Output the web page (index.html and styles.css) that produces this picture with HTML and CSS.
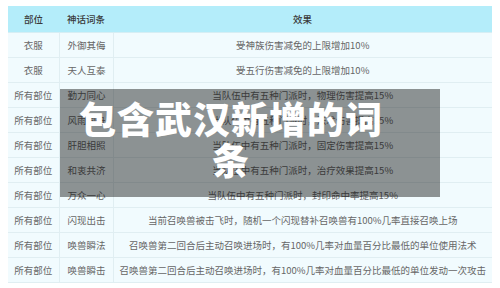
FILE: index.html
```html
<!DOCTYPE html>
<html lang="zh">
<head>
<meta charset="utf-8">
<title>神话词条</title>
<link rel="stylesheet" href="styles.css">
</head>
<body>
<div class="page">
  <table class="affix">
    <colgroup>
      <col class="c-part">
      <col class="c-name">
      <col class="c-effect">
    </colgroup>
    <thead>
      <tr><th>部位</th><th>神话词条</th><th>效果</th></tr>
    </thead>
    <tbody>
      <tr><td>衣服</td><td>外御其侮</td><td>受神族伤害减免的上限增加10%</td></tr>
      <tr><td>衣服</td><td>天人互泰</td><td>受五行伤害减免的上限增加10%</td></tr>
      <tr><td>所有部位</td><td>勤力同心</td><td>当队伍中有五种门派时，物理伤害提高15%</td></tr>
      <tr><td>所有部位</td><td>风雨同舟</td><td>当队伍中有五种门派时，法术伤害提高15%</td></tr>
      <tr><td>所有部位</td><td>肝胆相照</td><td>当队伍中有五种门派时，固定伤害提高15%</td></tr>
      <tr><td>所有部位</td><td>和衷共济</td><td>当队伍中有五种门派时，治疗效果提高15%</td></tr>
      <tr><td>所有部位</td><td>万众一心</td><td>当队伍中有五种门派时，封印命中率提高15%</td></tr>
      <tr><td>所有部位</td><td>闪现出击</td><td>当前召唤兽被击飞时，随机一个闪现替补召唤兽有100%几率直接召唤上场</td></tr>
      <tr><td>所有部位</td><td>唤兽瞬法</td><td>召唤兽第二回合后主动召唤进场时，有100%几率对血量百分比最低的单位使用法术</td></tr>
      <tr><td>所有部位</td><td>唤兽瞬击</td><td>召唤兽第二回合后主动召唤进场时，有100%几率对血量百分比最低的单位发动一次攻击</td></tr>
    </tbody>
  </table>
  <div class="banner"><h1 class="banner-title">包含武汉新增的词条</h1></div>
</div>
</body>
</html>
```
FILE: styles.css
```css
html, body {
  margin: 0;
  padding: 0;
  background: #ffffff;
}
body {
  font-family: "Noto Sans CJK SC", "Noto Sans", sans-serif;
}
.page {
  position: relative;
  width: 500px;
  height: 288px;
  padding: 6px 8px 0;
  box-sizing: border-box;
}
.affix {
  width: 484px;
  table-layout: fixed;
  border-collapse: collapse;
  font-size: 9.5px;
}
.c-part { width: 51px; }
.c-name { width: 54px; }
.affix th {
  height: 26px;
  padding: 0;
  background: #b4edfa;
  color: #3a3a3a;
  font-weight: 500;
  text-align: center;
  border-bottom: 1px solid #d6eef4;
}
.affix th:nth-child(2) {
  text-align: left;
  padding-left: 8px;
}
.affix td {
  height: 24px;
  padding: 0;
  background: #f1fbfe;
  color: #666666;
  text-align: center;
  white-space: nowrap;
  border-bottom: 1px solid #e0eef2;
  border-right: 1px solid #e0eef2;
}
.affix td:nth-child(2) {
  text-align: left;
  padding-left: 8px;
}
.affix td:last-child {
  border-right: none;
}
.banner {
  position: absolute;
  left: 60px;
  top: 89px;
  width: 380px;
  height: 108px;
  box-sizing: border-box;
  padding: 9px 41px 0 3px;
  background: rgba(0, 0, 0, 0.42);
}
.banner-title {
  margin: 0;
  color: #ffffff;
  font-size: 37px;
  line-height: 41px;
  font-weight: 900;
  text-align: center;
  letter-spacing: 1px;
}
```
